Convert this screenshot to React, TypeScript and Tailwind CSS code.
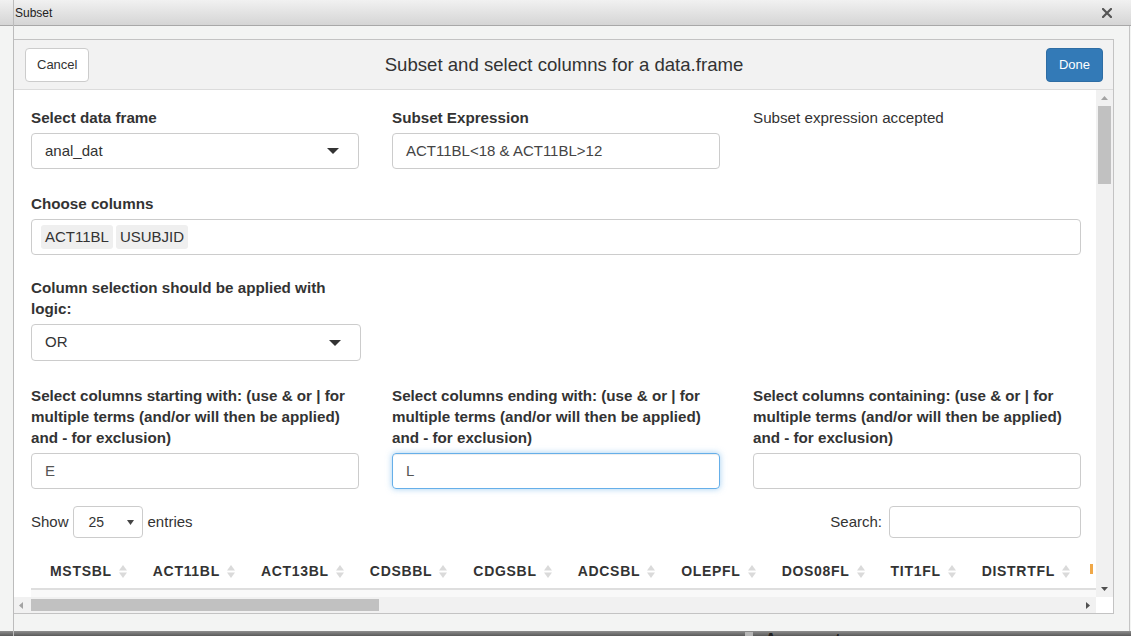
import React from "react";

const Caret = () => (
  <svg width="12" height="6" viewBox="0 0 12 6" className="block">
    <path d="M0 0 L12 0 L6 6 Z" fill="#333" />
  </svg>
);

const SortIcon = () => (
  <svg width="8" height="15" viewBox="0 0 8 15" className="block shrink-0">
    <path d="M0 6.5 L4 1 L8 6.5 Z" fill="#dadada" />
    <path d="M0 8.5 L8 8.5 L4 14 Z" fill="#dadada" />
  </svg>
);

const Tri = ({ dir, color }: { dir: "up" | "down" | "left" | "right"; color: string }) => {
  const d =
    dir === "up"
      ? "M0 4 L3.5 0 L7 4 Z"
      : dir === "down"
      ? "M0 0 L7 0 L3.5 4 Z"
      : dir === "left"
      ? "M4 0 L4 7 L0 3.5 Z"
      : "M0 0 L4 3.5 L0 7 Z";
  const w = dir === "up" || dir === "down" ? 7 : 4;
  const h = dir === "up" || dir === "down" ? 4 : 7;
  return (
    <svg width={w} height={h} viewBox={`0 0 ${w} ${h}`} className="block shrink-0">
      <path d={d} fill={color} />
    </svg>
  );
};

const Label = ({ children }: { children: React.ReactNode }) => (
  <div className="text-[15.2px] font-bold leading-[21px] text-[#333] mb-[5px]">{children}</div>
);

const headers = [
  "MSTSBL",
  "ACT11BL",
  "ACT13BL",
  "CDSBBL",
  "CDGSBL",
  "ADCSBL",
  "OLEPFL",
  "DOS08FL",
  "TIT1FL",
  "DISTRTFL",
];

export default function App() {
  return (
    <div className="relative w-[1131px] h-[636px] overflow-hidden bg-[#f3f4f3] font-['Liberation_Sans',Arial,sans-serif] text-[#333]">
      {/* title bar */}
      <div className="h-[26px] border-b border-[#a8a8a8] bg-gradient-to-b from-[#f1f1f1] to-[#d5d5d5] flex items-center justify-between pl-[15px] pr-[19px]">
        <span className="text-[12px] text-[#222]">Subset</span>
        <svg width="10" height="10" viewBox="0 0 10 10" className="block">
          <path d="M1 1 L9 9 M9 1 L1 9" stroke="#555" strokeWidth="2.2" strokeLinecap="square" />
        </svg>
      </div>

      {/* body */}
      <div className="w-[1130px] h-[605px] border-r border-[#c4c4c4] pt-[13px] pl-[13px]">
        <div className="w-[1101px] h-[575px] border border-[#c3c3c3] bg-white flex flex-col">
          {/* header */}
          <div className="h-[50px] shrink-0 bg-[#f2f2f2] border-b border-[#dcdcdc] grid grid-cols-[1fr_auto_1fr] items-center pl-[11px] pr-[10px]">
            <div className="flex">
              <div className="h-[34px] px-[11px] flex items-center bg-white border border-[#cccccc] rounded-[4px] text-[13px] text-[#333]">
                Cancel
              </div>
            </div>
            <div className="text-[18.6px] text-[#333]">Subset and select columns for a data.frame</div>
            <div className="flex justify-end">
              <div className="h-[34px] px-[12px] flex items-center bg-[#337ab7] border border-[#2e6da4] rounded-[4px] text-[13px] text-white">
                Done
              </div>
            </div>
          </div>

          {/* main scroll area */}
          <div className="flex h-[507px] shrink-0">
            <div className="w-[1082px] h-[507px] overflow-hidden pl-[17px] pr-[15px] pt-[17px]">
              {/* row 1 */}
              <div className="grid grid-cols-[328px_328px_328px] gap-x-[33px]">
                <div>
                  <Label>Select data frame</Label>
                  <div className="h-[36px] border border-[#cccccc] rounded-[4px] flex items-center justify-between pl-[13px] pr-[19px] text-[15px]">
                    <span>anal_dat</span>
                    <Caret />
                  </div>
                </div>
                <div>
                  <Label>Subset Expression</Label>
                  <div className="h-[36px] border border-[#cccccc] rounded-[4px] flex items-center pl-[13px] text-[15px] text-[#444]">
                    ACT11BL&lt;18 &amp; ACT11BL&gt;12
                  </div>
                </div>
                <div className="text-[15.2px] leading-[21px] text-[#333]">Subset expression accepted</div>
              </div>

              {/* row 2 */}
              <div className="mt-[24px]">
                <Label>Choose columns</Label>
                <div className="h-[36px] w-[1050px] border border-[#cccccc] rounded-[4px] flex items-center gap-[3px] pl-[9px] text-[15px]">
                  <span className="h-[24px] px-[4px] flex items-center bg-[#efefef] rounded-[3px]">ACT11BL</span>
                  <span className="h-[24px] px-[4px] flex items-center bg-[#efefef] rounded-[3px]">USUBJID</span>
                </div>
              </div>

              {/* row 3 */}
              <div className="mt-[22px] w-[330px]">
                <div className="w-[328px]">
                  <Label>Column selection should be applied with logic:</Label>
                </div>
                <div className="h-[37px] border border-[#cccccc] rounded-[4px] flex items-center justify-between pl-[13px] pr-[19px] text-[15px]">
                  <span>OR</span>
                  <Caret />
                </div>
              </div>

              {/* row 4 */}
              <div className="mt-[24px] grid grid-cols-[328px_328px_328px] gap-x-[33px]">
                <div>
                  <Label>Select columns starting with: (use &amp; or | for multiple terms (and/or will then be applied) and - for exclusion)</Label>
                  <div className="h-[36px] border border-[#cccccc] rounded-[4px] flex items-center pl-[13px] text-[15px] text-[#555]">
                    E
                  </div>
                </div>
                <div>
                  <Label>Select columns ending with: (use &amp; or | for multiple terms (and/or will then be applied) and - for exclusion)</Label>
                  <div className="h-[36px] border border-[#66afe9] rounded-[4px] flex items-center pl-[13px] text-[15px] text-[#555] shadow-[inset_0_1px_1px_rgba(0,0,0,0.075),0_0_6px_rgba(102,175,233,0.6)]">
                    L
                  </div>
                </div>
                <div>
                  <Label>Select columns containing: (use &amp; or | for multiple terms (and/or will then be applied) and - for exclusion)</Label>
                  <div className="h-[36px] border border-[#cccccc] rounded-[4px]" />
                </div>
              </div>

              {/* show / search */}
              <div className="mt-[17px] h-[32px] flex items-center justify-between text-[15px]">
                <div className="flex items-center">
                  <span>Show</span>
                  <div className="ml-[4px] w-[70px] h-[32px] border border-[#cccccc] rounded-[4px] flex items-center justify-between pl-[15px] pr-[8px] text-[14px]">
                    <span>25</span>
                    <svg width="7" height="5" viewBox="0 0 7 5" className="block">
                      <path d="M0 0 L7 0 L3.5 5 Z" fill="#444" />
                    </svg>
                  </div>
                  <span className="ml-[5px]">entries</span>
                </div>
                <div className="flex items-center">
                  <span>Search:</span>
                  <div className="ml-[7px] w-[192px] h-[32px] border border-[#cccccc] rounded-[4px]" />
                </div>
              </div>

              {/* table header */}
              <div className="mt-[16px] w-max min-w-[1100px]">
                <div className="flex h-[36px] items-center border-b-2 border-[#dedede] pl-[19px]">
                  {headers.map((h, i) => (
                    <div
                      key={h}
                      className={i === headers.length - 1 ? "flex items-center pr-[20px]" : "flex items-center pr-[26px]"}
                    >
                      <span className="text-[14px] font-bold tracking-[0.7px] text-[#333]">{h}</span>
                      <span className="ml-[7px]">
                        <SortIcon />
                      </span>
                    </div>
                  ))}
                  <div className="w-[3px] h-[10px] bg-[#f0a848] -mt-[4px]" />
                </div>
                <div className="h-[20px] bg-[#f9f9f9]" />
              </div>
            </div>

            {/* vertical scrollbar */}
            <div className="w-[17px] h-[507px] bg-[#f1f1f1] flex flex-col items-center pt-[6px] pb-[6px]">
              <Tri dir="up" color="#a3a3a3" />
              <div className="mt-[6px] w-[13px] h-[78px] bg-[#c1c1c1]" />
              <div className="flex-1" />
              <Tri dir="down" color="#505050" />
            </div>
          </div>

          {/* horizontal scrollbar */}
          <div className="flex h-[16px] shrink-0">
            <div className="w-[1082px] h-[16px] bg-[#f1f1f1] flex items-center pl-[5px] pr-[6px]">
              <Tri dir="left" color="#a3a3a3" />
              <div className="ml-[8px] w-[348px] h-[12px] bg-[#c1c1c1]" />
              <div className="flex-1" />
              <Tri dir="right" color="#505050" />
            </div>
            <div className="w-[17px] h-[16px] bg-white" />
          </div>
        </div>
      </div>

      {/* bottom strip */}
      <div className="h-[5px] bg-gradient-to-b from-[#8f8f8f] to-[#5a5a5a] overflow-hidden flex items-start pl-[745px] pt-[1px]">
        <div className="w-[8px] h-[8px] bg-[#b5b5b5]" />
        <span className="ml-[12px] text-[16px] font-bold leading-[16px] text-[#222]">Arguments</span>
      </div>

      {/* left edge line */}
      <div className="absolute left-[13px] top-0 w-px h-[636px] bg-[#bcbcbc]" />
    </div>
  );
}
